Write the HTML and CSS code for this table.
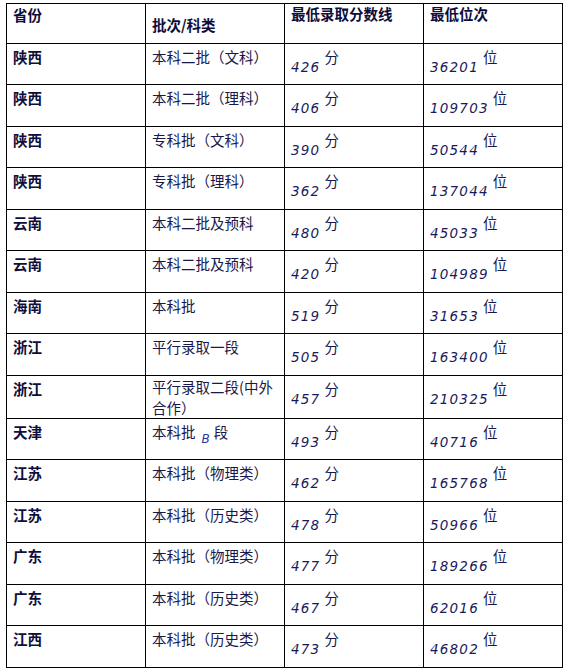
FILE: index.html
```html
<!DOCTYPE html>
<html lang="zh">
<head>
<meta charset="utf-8">
<title>录取分数线</title>
<link rel="stylesheet" href="styles.css">
</head>
<body>
<table class="score-table">
  <colgroup>
    <col class="c1"><col class="c2"><col class="c3"><col class="c4">
  </colgroup>
  <thead>
    <tr class="head">
      <th class="h-prov">省份</th>
      <th class="h-batch">批次/科类</th>
      <th class="h-score">最低录取分数线</th>
      <th class="h-rank">最低位次</th>
    </tr>
  </thead>
  <tbody>
    <tr><td class="prov">陕西</td><td class="batch">本科二批（文科）</td><td class="val"><span class="num">426</span><span class="unit">分</span></td><td class="val"><span class="num">36201</span><span class="unit">位</span></td></tr>
    <tr><td class="prov">陕西</td><td class="batch">本科二批（理科）</td><td class="val"><span class="num">406</span><span class="unit">分</span></td><td class="val"><span class="num">109703</span><span class="unit">位</span></td></tr>
    <tr><td class="prov">陕西</td><td class="batch">专科批（文科）</td><td class="val"><span class="num">390</span><span class="unit">分</span></td><td class="val"><span class="num">50544</span><span class="unit">位</span></td></tr>
    <tr><td class="prov">陕西</td><td class="batch">专科批（理科）</td><td class="val"><span class="num">362</span><span class="unit">分</span></td><td class="val"><span class="num">137044</span><span class="unit">位</span></td></tr>
    <tr><td class="prov">云南</td><td class="batch">本科二批及预科</td><td class="val"><span class="num">480</span><span class="unit">分</span></td><td class="val"><span class="num">45033</span><span class="unit">位</span></td></tr>
    <tr><td class="prov">云南</td><td class="batch">本科二批及预科</td><td class="val"><span class="num">420</span><span class="unit">分</span></td><td class="val"><span class="num">104989</span><span class="unit">位</span></td></tr>
    <tr><td class="prov">海南</td><td class="batch">本科批</td><td class="val"><span class="num">519</span><span class="unit">分</span></td><td class="val"><span class="num">31653</span><span class="unit">位</span></td></tr>
    <tr><td class="prov">浙江</td><td class="batch">平行录取一段</td><td class="val"><span class="num">505</span><span class="unit">分</span></td><td class="val"><span class="num">163400</span><span class="unit">位</span></td></tr>
    <tr><td class="prov">浙江</td><td class="batch tight">平行录取二段(中外<br>合作）</td><td class="val"><span class="num">457</span><span class="unit">分</span></td><td class="val"><span class="num">210325</span><span class="unit">位</span></td></tr>
    <tr><td class="prov">天津</td><td class="batch">本科批<span class="letter">B</span>段</td><td class="val"><span class="num">493</span><span class="unit">分</span></td><td class="val"><span class="num">40716</span><span class="unit">位</span></td></tr>
    <tr><td class="prov">江苏</td><td class="batch">本科批（物理类）</td><td class="val"><span class="num">462</span><span class="unit">分</span></td><td class="val"><span class="num">165768</span><span class="unit">位</span></td></tr>
    <tr><td class="prov">江苏</td><td class="batch">本科批（历史类）</td><td class="val"><span class="num">478</span><span class="unit">分</span></td><td class="val"><span class="num">50966</span><span class="unit">位</span></td></tr>
    <tr><td class="prov">广东</td><td class="batch">本科批（物理类）</td><td class="val"><span class="num">477</span><span class="unit">分</span></td><td class="val"><span class="num">189266</span><span class="unit">位</span></td></tr>
    <tr><td class="prov">广东</td><td class="batch">本科批（历史类）</td><td class="val"><span class="num">467</span><span class="unit">分</span></td><td class="val"><span class="num">62016</span><span class="unit">位</span></td></tr>
    <tr><td class="prov">江西</td><td class="batch">本科批（历史类）</td><td class="val"><span class="num">473</span><span class="unit">分</span></td><td class="val"><span class="num">46802</span><span class="unit">位</span></td></tr>
  </tbody>
</table>
</body>
</html>
```
FILE: styles.css
```css
html, body {
  margin: 0;
  padding: 0;
  background: #ffffff;
}

body {
  padding: 3px 0 0 6px;
  font-family: "Noto Sans CJK SC", "Noto Sans", sans-serif;
  font-size: 14.5px;
  color: #18184a;
}

.score-table {
  border-collapse: collapse;
  table-layout: fixed;
  width: 556px;
}

.c1, .c2, .c3, .c4 { width: 139px; }

.score-table th,
.score-table td {
  border: 1px solid #000000;
  vertical-align: top;
  text-align: left;
  padding: 3px 5px 0 6px;
  line-height: 20px;
  overflow: hidden;
}

.head { height: 40px; }
.score-table tbody tr { height: 41.47px; }

.score-table th {
  font-weight: bold;
  color: #0e0e3c;
  padding-top: 1px;
}

.h-batch { padding-top: 11px !important; }
.h-score, .h-rank { padding-top: 0 !important; }

.prov {
  font-weight: bold;
  color: #0e0e3c;
}

.batch.tight {
  padding-top: 0;
  line-height: 21px;
}

.val {
  white-space: nowrap;
}

.num {
  font-family: "DejaVu Sans", sans-serif;
  font-style: italic;
  font-size: 13.5px;
  letter-spacing: 1.2px;
  color: #1a1a5a;
  vertical-align: -9px;
  line-height: 14px;
}

.unit {
  margin-left: 4px;
}

.letter {
  font-family: "DejaVu Sans", sans-serif;
  font-style: italic;
  font-size: 12px;
  color: #2a3a9a;
  vertical-align: -5px;
  line-height: 12px;
  margin: 0 4px 0 6px;
}
```
